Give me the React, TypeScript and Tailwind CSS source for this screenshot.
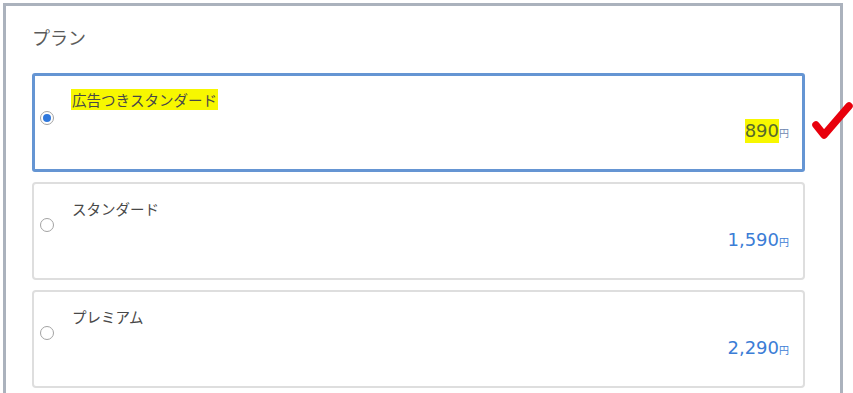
const plans = [
  { name: "広告つきスタンダード", price: "890", selected: true },
  { name: "スタンダード", price: "1,590", selected: false },
  { name: "プレミアム", price: "2,290", selected: false },
]

function Radio({ checked }: { checked: boolean }) {
  return (
    <span className="flex h-[14px] w-[14px] items-center justify-center rounded-full border border-[#a3a3a3] bg-white">
      {checked && <span className="h-[8px] w-[8px] rounded-full bg-[#2f78dc]" />}
    </span>
  )
}

function PlanCard({ name, price, selected }: { name: string; price: string; selected: boolean }) {
  return (
    <div
      className={
        selected
          ? "flex h-[99px] rounded-[3px] border-[3px] border-[#6595d3] bg-white"
          : "flex h-[98px] rounded-[4px] border-2 border-[#dedede] bg-white"
      }
    >
      <div className={selected ? "ml-[5px] pt-[35px]" : "ml-[6px] pt-[34px]"}>
        <Radio checked={selected} />
      </div>
      <div className={selected ? "ml-[17px] flex flex-1 flex-col pr-[13px] pt-[14px]" : "ml-[18px] flex flex-1 flex-col pr-[14px] pt-[15px]"}>
        <div className="text-[14.5px] leading-[20px] text-[#484848]">
          <span className={selected ? "bg-[#f7f700] px-[1px]" : ""}>{name}</span>
        </div>
        <div className="mt-[9px] flex items-baseline justify-end font-['DejaVu_Sans',sans-serif] leading-[24px]">
          <span className={selected ? "bg-[#f7f700] text-[18px] text-[#566a2c]" : "text-[18px] text-[#3b7dd6]"}>
            {price}
          </span>
          <span className={selected ? "text-[10px] text-[#6c86b0] font-['Noto_Sans_CJK_JP',sans-serif]" : "text-[10px] text-[#3b7dd6] font-['Noto_Sans_CJK_JP',sans-serif]"}>
            円
          </span>
        </div>
      </div>
    </div>
  )
}

export default function App() {
  return (
    <div className="relative h-[393px] w-[853px] overflow-hidden bg-white pl-[3px] pt-[3px] font-['Noto_Sans_CJK_JP','Noto_Sans',sans-serif]">
      <div className="h-[400px] w-[840px] border-[3px] border-b-0 border-[#abb2bd] pl-[26px] pr-[35px] pt-[19px]">
        <h2 className="text-[18px] leading-[24px] text-[#5a5a5a]">プラン</h2>
        <div className="mt-[24px] flex flex-col gap-[10px]">
          {plans.map((p) => (
            <PlanCard key={p.name} {...p} />
          ))}
        </div>
      </div>
      <svg
        className="absolute left-[808px] top-[98px]"
        width="45"
        height="45"
        viewBox="0 0 45 45"
        fill="none"
      >
        <path
          d="M8 27 L16 37 L41 8"
          stroke="#e8000c"
          strokeWidth="7.5"
          strokeLinecap="round"
          strokeLinejoin="round"
        />
      </svg>
    </div>
  )
}
